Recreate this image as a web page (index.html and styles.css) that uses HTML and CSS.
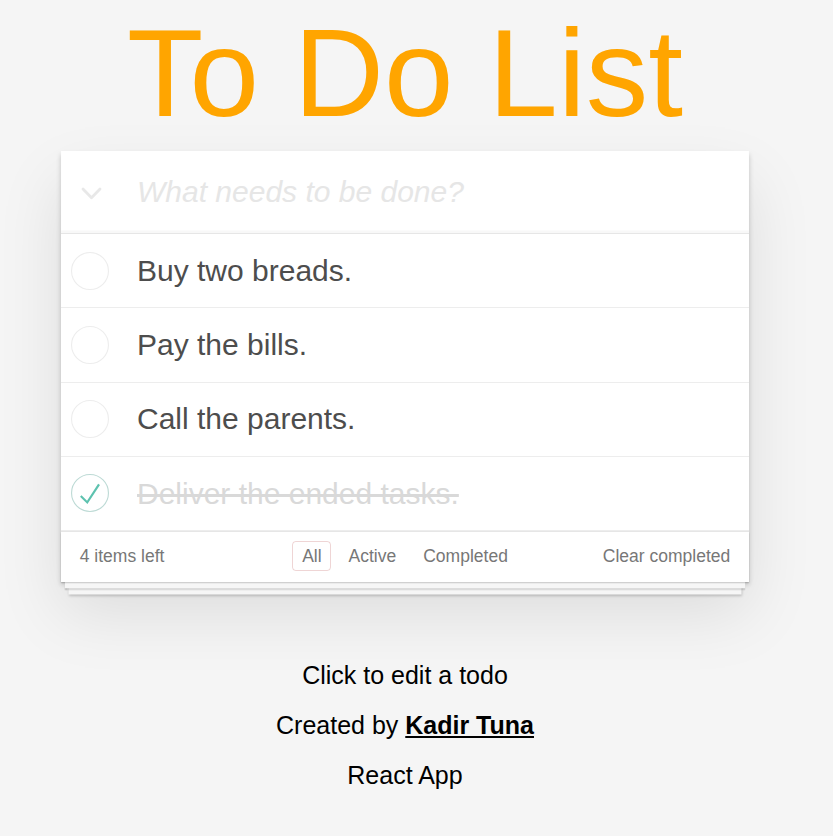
FILE: index.html
```html
<!DOCTYPE html>
<html lang="en">
<head>
<meta charset="utf-8">
<title>React App</title>
<link rel="stylesheet" href="styles.css">
</head>
<body>
<div class="page">
  <h1 class="title">To Do List</h1>
  <section class="todoapp">
    <header class="header">
      <label class="toggle-all" aria-label="Mark all as complete">
        <svg class="chevron" width="21" height="13" viewBox="0 0 21 13"><polyline points="2,2 10.5,10.8 19,2" fill="none" stroke="#e8e8e8" stroke-width="2.8" stroke-linecap="round" stroke-linejoin="round"/></svg>
      </label>
      <input class="new-todo" placeholder="What needs to be done?">
    </header>
    <ul class="todo-list">
      <li class="todo">
        <span class="toggle"><svg width="38" height="38" viewBox="-1.5 -1.5 103 103"><circle cx="50" cy="50" r="50" fill="none" stroke="#ededed" stroke-width="3"/></svg></span>
        <label class="todo-label">Buy two breads.</label>
      </li>
      <li class="todo">
        <span class="toggle"><svg width="38" height="38" viewBox="-1.5 -1.5 103 103"><circle cx="50" cy="50" r="50" fill="none" stroke="#ededed" stroke-width="3"/></svg></span>
        <label class="todo-label">Pay the bills.</label>
      </li>
      <li class="todo">
        <span class="toggle"><svg width="38" height="38" viewBox="-1.5 -1.5 103 103"><circle cx="50" cy="50" r="50" fill="none" stroke="#ededed" stroke-width="3"/></svg></span>
        <label class="todo-label">Call the parents.</label>
      </li>
      <li class="todo completed">
        <span class="toggle"><svg width="38" height="38" viewBox="-1.5 -1.5 103 103"><circle cx="50" cy="50" r="50" fill="none" stroke="#bddad5" stroke-width="3"/><path fill="#5dc2af" d="M72 25L42 71 27 56l-4 4 20 20 34-52z"/></svg></span>
        <label class="todo-label">Deliver the ended tasks.</label>
      </li>
    </ul>
    <footer class="footer">
      <span class="todo-count">4 items left</span>
      <ul class="filters">
        <li><a class="filter selected">All</a></li>
        <li><a class="filter">Active</a></li>
        <li><a class="filter">Completed</a></li>
      </ul>
      <button class="clear-completed">Clear completed</button>
    </footer>
  </section>
  <footer class="info">
    <p>Click to edit a todo</p>
    <p>Created by <a class="author">Kadir Tuna</a></p>
    <p>React App</p>
  </footer>
</div>
</body>
</html>
```
FILE: styles.css
```css
html, body {
  margin: 0;
  padding: 0;
}

body {
  background: #f5f5f5;
  font-family: "Liberation Sans", Arial, Helvetica, sans-serif;
  color: #4d4d4d;
  padding-top: 10px;
  padding-right: 23px;
  -webkit-font-smoothing: antialiased;
}

.page {
  width: 688px;
  margin: 0 auto;
}

.title {
  margin: 0;
  font-size: 125px;
  line-height: 125px;
  font-weight: 400;
  color: #ffa500;
  text-align: center;
  text-rendering: optimizeLegibility;
}

.todoapp {
  margin-top: 16px;
  background: #fff;
  position: relative;
  box-shadow: 0 2.5px 5px 0 rgba(0, 0, 0, 0.2), 0 31px 62px 0 rgba(0, 0, 0, 0.1);
}

.header {
  display: flex;
  height: 82px;
  box-shadow: inset 0 -2.5px 1.25px rgba(0, 0, 0, 0.03);
}

.toggle-all {
  width: 76px;
  flex: none;
  display: flex;
  align-items: center;
  padding-left: 20px;
  box-sizing: border-box;
}

.chevron {
  display: block;
  margin-top: 2px;
}

.new-todo {
  flex: 1;
  min-width: 0;
  border: none;
  outline: none;
  background: transparent;
  padding: 0 20px 0 0;
  margin: 0;
  font-family: inherit;
  font-size: 30px;
  color: inherit;
}

.new-todo::placeholder {
  font-style: italic;
  color: #e6e6e6;
}

.todo-list {
  list-style: none;
  margin: 0;
  padding: 0;
  border-top: 1px solid #e6e6e6;
}

.todo {
  display: flex;
  align-items: center;
  border-bottom: 1px solid #ededed;
}

.toggle {
  width: 76px;
  flex: none;
  padding-left: 10px;
  box-sizing: border-box;
  display: flex;
  align-items: center;
}

.toggle svg {
  display: block;
}

.todo-label {
  flex: 1;
  padding: 18.75px 18.75px 18.5px 0;
  font-size: 30px;
  line-height: 36px;
  color: #4d4d4d;
}

.completed .todo-label {
  color: #d9d9d9;
  text-decoration: line-through;
}

.footer {
  position: relative;
  display: grid;
  grid-template-columns: 1fr auto 1fr;
  grid-template-rows: 25px;
  align-items: center;
  height: 25px;
  padding: 11.5px 18.75px 13.5px;
  border-top: 1px solid #e6e6e6;
  color: #777;
  font-size: 17.5px;
  line-height: 20px;
}

.footer::before {
  content: "";
  position: absolute;
  left: 0;
  right: 0;
  bottom: 0;
  height: 50px;
  box-shadow:
    0 1.25px 1.25px rgba(0, 0, 0, 0.2),
    0 10px 0 -3.75px #f6f6f6,
    0 11.25px 1.25px -3.75px rgba(0, 0, 0, 0.2),
    0 20px 0 -7.5px #f6f6f6,
    0 21.25px 2.5px -7.5px rgba(0, 0, 0, 0.2);
}

.todo-count {
  justify-self: start;
}

.filters {
  list-style: none;
  margin: 0;
  padding: 0;
  display: flex;
}

.filter {
  display: block;
  margin: 0 3.75px;
  padding: 3.75px 8.75px;
  border: 1.25px solid transparent;
  border-radius: 3.75px;
  color: inherit;
  text-decoration: none;
}

.filter.selected {
  border-color: rgba(175, 47, 47, 0.2);
}

.clear-completed {
  justify-self: end;
  border: none;
  background: none;
  padding: 0;
  margin: 0;
  font-family: inherit;
  font-size: 17.5px;
  line-height: 20px;
  color: inherit;
  position: relative;
}

.info {
  margin-top: 81px;
  text-align: center;
  color: #000;
  font-size: 25px;
  line-height: 25px;
}

.info p {
  margin: 0 0 25px;
}

.author {
  font-weight: 700;
  color: #000;
  text-decoration: underline;
}
```
